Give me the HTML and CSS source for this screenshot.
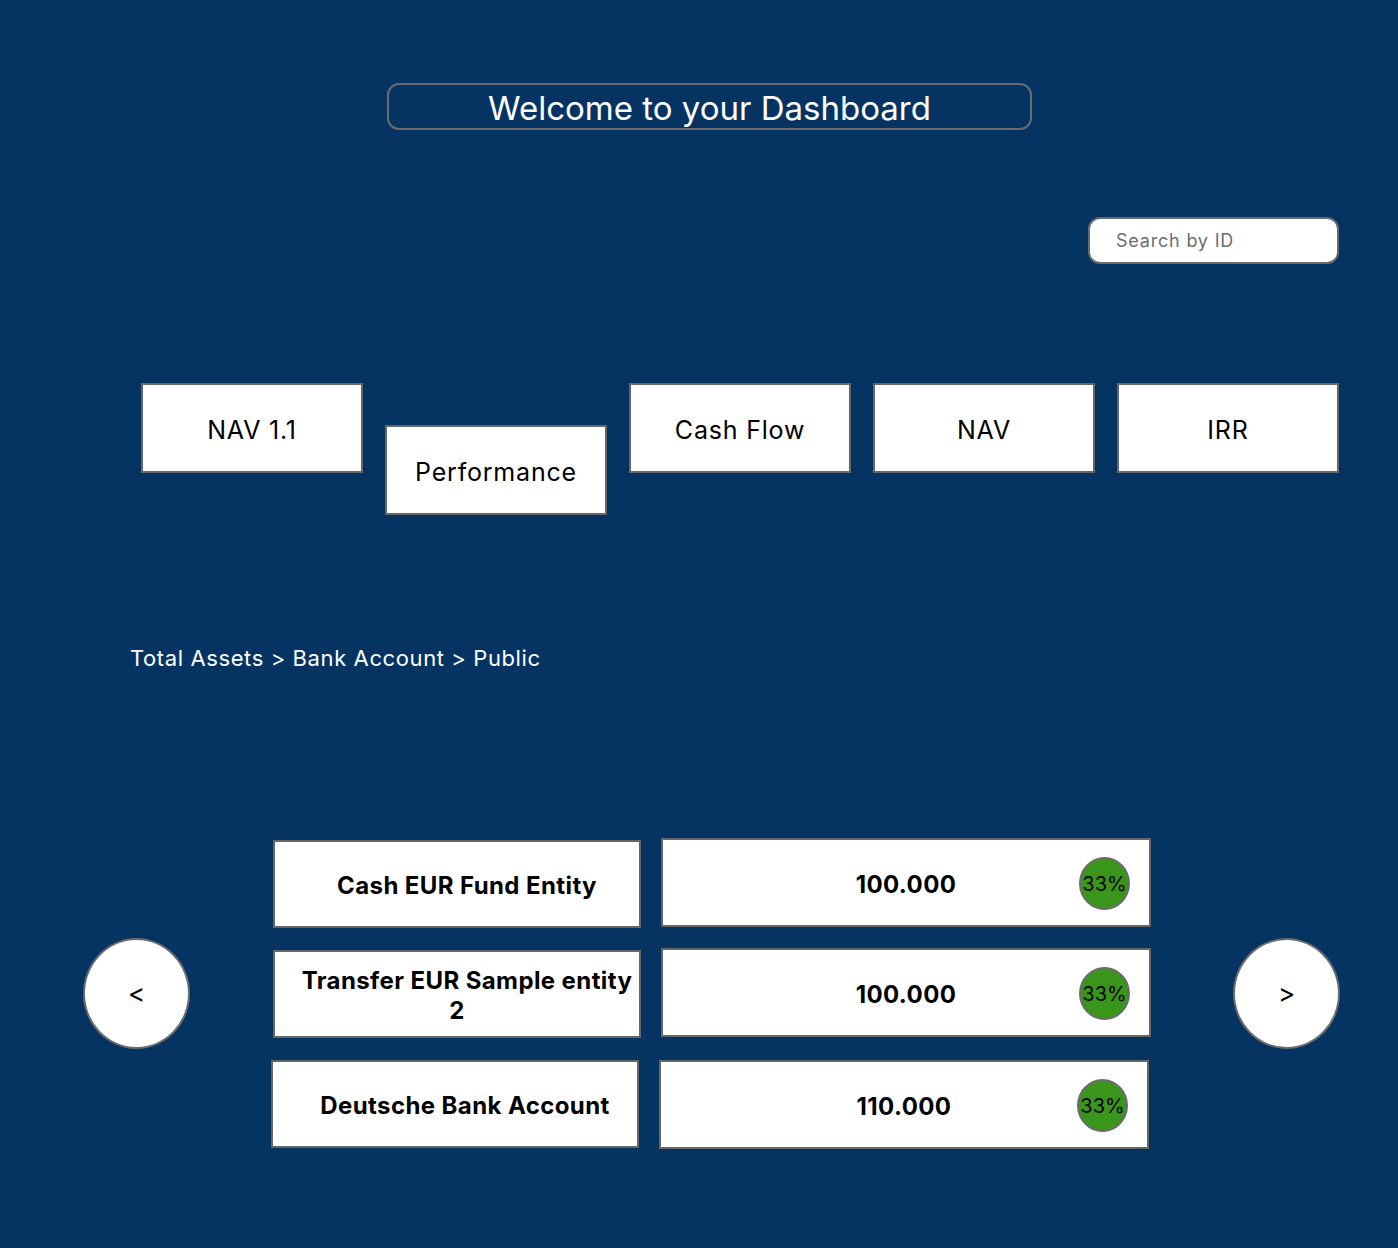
FILE: index.html
```html
<!DOCTYPE html>
<html lang="en">
<head>
<meta charset="utf-8">
<title>Dashboard</title>
<link rel="stylesheet" href="styles.css">
</head>
<body>
<div class="page">
  <header class="title-wrap">
    <h1 class="title">Welcome to your Dashboard</h1>
  </header>
  <div class="search-row">
    <input class="search" type="text" placeholder="Search by ID">
  </div>
  <nav class="tiles">
    <div class="tile">NAV 1.1</div>
    <div class="tile tile-low">Performance</div>
    <div class="tile">Cash Flow</div>
    <div class="tile">NAV</div>
    <div class="tile">IRR</div>
  </nav>
  <div class="crumbs">Total Assets &gt; Bank Account &gt; Public</div>
  <section class="carousel">
    <button class="round">&lt;</button>
    <div class="rows">
      <div class="row">
        <div class="name"><p class="name-text">Cash EUR Fund Entity</p></div>
        <div class="value"><span class="amount">100.000</span><span class="badge">33%</span></div>
      </div>
      <div class="row">
        <div class="name"><p class="name-text">Transfer EUR Sample entity 2</p></div>
        <div class="value"><span class="amount">100.000</span><span class="badge">33%</span></div>
      </div>
      <div class="row row-shift">
        <div class="name"><p class="name-text">Deutsche Bank Account</p></div>
        <div class="value"><span class="amount">110.000</span><span class="badge">33%</span></div>
      </div>
    </div>
    <button class="round">&gt;</button>
  </section>
</div>
</body>
</html>
```

FILE: styles.css
```css
html, body {
  margin: 0;
  padding: 0;
}
body {
  background: #053463;
  font-family: Inter, "Noto Sans", "Liberation Sans", sans-serif;
  width: 1398px;
  height: 1248px;
  overflow: hidden;
}
.page {
  display: flex;
  flex-direction: column;
}
.title-wrap {
  padding-top: 83px;
  padding-left: 387px;
}
.title {
  margin: 0;
  box-sizing: border-box;
  width: 645px;
  height: 47px;
  border: 2px solid #6b6b6b;
  border-radius: 12px;
  color: #fff;
  font-weight: 400;
  font-size: 33px;
  line-height: 43px;
  padding-top: 2px;
  text-align: center;
  letter-spacing: 0;
}
.search-row {
  display: flex;
  justify-content: flex-end;
  padding-right: 59px;
  margin-top: 87px;
}
.search {
  box-sizing: border-box;
  width: 251px;
  height: 47px;
  border: 2px solid #6b6b6b;
  border-radius: 12px;
  background: #fff;
  padding: 0 0 0 26px;
  font-family: inherit;
  font-size: 18px;
  letter-spacing: 0.8px;
  color: #333;
  outline: none;
}
.search::placeholder {
  color: #6e6e6e;
}
.tiles {
  display: flex;
  justify-content: flex-end;
  align-items: flex-start;
  gap: 22px;
  padding-right: 59px;
  margin-top: 119px;
}
.tile {
  box-sizing: border-box;
  width: 222px;
  height: 90px;
  border: 2px solid #666;
  background: #fff;
  display: flex;
  align-items: center;
  justify-content: center;
  padding-top: 3px;
  font-size: 25px;
  letter-spacing: 0.8px;
  color: #000;
}
.tile-low {
  margin-top: 42px;
}
.crumbs {
  margin-top: 128px;
  padding-left: 130px;
  color: #fff;
  font-size: 22px;
  letter-spacing: 0.6px;
  line-height: 30px;
}
.carousel {
  display: flex;
  align-items: center;
  margin-top: 165px;
  padding-left: 83px;
}
.round {
  box-sizing: border-box;
  width: 107px;
  height: 111px;
  border-radius: 50%;
  border: 2px solid #6b6b6b;
  background: #fff;
  font-family: inherit;
  font-size: 26px;
  color: #000;
  padding: 0;
}
.rows {
  display: flex;
  flex-direction: column;
  gap: 20px;
  margin: 0 82px 0 83px;
}
.row {
  display: flex;
  align-items: flex-start;
  gap: 20px;
}
.row-shift {
  margin-left: -2px;
  margin-top: 2px;
}
.name {
  box-sizing: border-box;
  width: 368px;
  height: 88px;
  margin-top: 2px;
  border: 2px solid #666;
  background: #fff;
  display: flex;
  align-items: center;
  justify-content: center;
  padding-top: 3px;
  color: #000;
}
.name-text {
  margin: 0;
  width: 100%;
  text-align: center;
  text-indent: 20px;
  font-weight: 700;
  font-size: 24px;
  letter-spacing: 0.4px;
  line-height: 30px;
}
.row-shift .name {
  margin-top: 0;
}
.value {
  box-sizing: border-box;
  width: 490px;
  height: 89px;
  border: 2px solid #666;
  background: #fff;
  display: flex;
  align-items: center;
  position: relative;
}
.amount {
  flex: 1;
  text-align: center;
  padding-top: 3px;
  font-weight: 700;
  font-size: 24px;
  letter-spacing: 0.4px;
  color: #000;
}
.badge {
  position: absolute;
  right: 19px;
  top: 17px;
  box-sizing: border-box;
  width: 51px;
  height: 53px;
  border-radius: 50%;
  border: 2px solid #6b6b6b;
  background: #3a961a;
  display: flex;
  align-items: center;
  justify-content: center;
  padding-top: 1px;
  font-size: 20px;
  color: #000;
}
```
